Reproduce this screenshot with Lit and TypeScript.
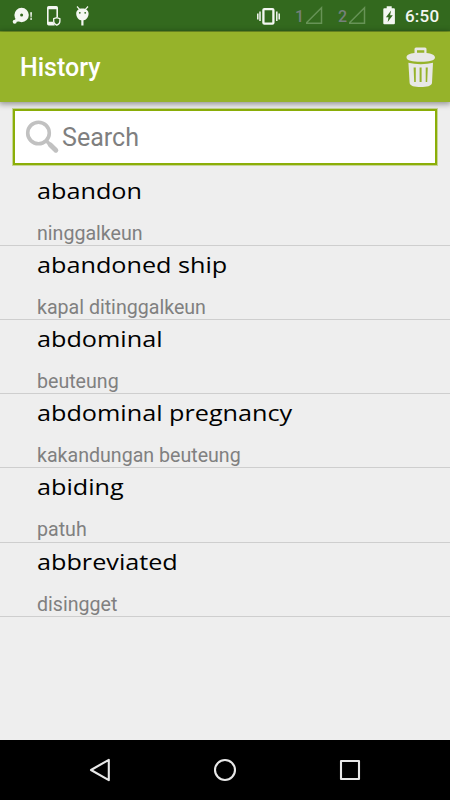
import { LitElement, html, css } from "lit";
import { customElement } from "lit/decorators.js";

interface Entry {
  word: string;
  meaning: string;
}

const ENTRIES: Entry[] = [
  { word: "abandon", meaning: "ninggalkeun" },
  { word: "abandoned ship", meaning: "kapal ditinggalkeun" },
  { word: "abdominal", meaning: "beuteung" },
  { word: "abdominal pregnancy", meaning: "kakandungan beuteung" },
  { word: "abiding", meaning: "patuh" },
  { word: "abbreviated", meaning: "disingget" },
];

@customElement("status-bar")
class StatusBar extends LitElement {
  static styles = css`
    :host {
      display: flex;
      justify-content: space-between;
      height: 32px;
      background: linear-gradient(#33691e 31px, #7b9d27 31px);
      font-family: Roboto, "Liberation Sans", sans-serif;
    }
    svg {
      display: block;
    }
    .right {
      display: flex;
    }
    .sim {
      width: 11px;
      font-size: 16px;
      font-weight: 500;
      line-height: 33px;
      color: #75807a;
    }
    .sim.two {
      margin-left: 13px;
    }
    .time {
      width: 45px;
      padding-left: 9px;
      font-size: 17px;
      font-weight: 500;
      line-height: 33px;
      letter-spacing: 0.2px;
      color: #f3f6f1;
      white-space: nowrap;
    }
  `;

  private signal() {
    return html`<svg width="19" height="31" viewBox="0 0 19 31">
      <path d="M0 23.300H15.500V7.800Z" fill="none" stroke="#679356" stroke-width="1.500" />
    </svg>`;
  }

  render() {
    return html`
      <svg width="100" height="31" viewBox="0 0 100 31">
        <g fill="#f4f7f2">
          <circle cx="21.600" cy="15" r="7.200" />
          <circle cx="14.700" cy="21.700" r="2" />
          <path d="M15 19.500l1.500-2 3 3.500-3 1z" />
          <path d="M30.200 12.200h1.800l-.4 5.200h-1z" />
          <circle cx="31.100" cy="19" r=".9" />
          <path d="M48.700 6h7.600q1.700 0 1.700 1.700v9.600h-1.600V9.200h-7.800v12.600h4.600l1.600 3.600h-6.100q-1.700 0-1.700-1.700v-16q0-1.700 1.700-1.700z" />
          <path d="M76.200 13.600c0-3.200 2.200-5.200 6.100-5.200s6.300 2 6.300 5.200c0 4.200-2.800 7-6.200 7s-6.200-2.800-6.200-7z" />
          <path d="M81.300 20h2.200v5.500h-2.200z" />
        </g>
        <path d="M77 6.500l2.800 3.100M88 6.500l-2.800 3.100" stroke="#f4f7f2" stroke-width="1.200" />
        <circle cx="21.600" cy="15" r="1.500" fill="#33691e" />
        <circle cx="79.800" cy="12.800" r=".9" fill="#33691e" />
        <circle cx="85.200" cy="12.800" r=".9" fill="#33691e" />
        <path
          d="M53.700 18.600l3.100-1 3.100 1v2.600c0 2-1.200 3.300-3.100 4-2-.7-3.100-2-3.100-4z"
          fill="#33691e"
          stroke="#f4f7f2"
          stroke-width="1.300"
        />
      </svg>
      <div class="right">
        <svg width="38" height="31" viewBox="0 0 38 31">
          <rect x="6.400" y="9.100" width="10" height="14.600" rx="1" fill="none" stroke="#f4f7f2" stroke-width="2.300" />
          <path d="M.8 13.600v6M3 11.600v9.400M19.800 11.600v9.400M22.200 13.600v6" stroke="#f4f7f2" stroke-width="1.500" />
        </svg>
        <span class="sim">1</span>${this.signal()}
        <span class="sim two">2</span>${this.signal()}
        <svg width="28" height="31" viewBox="0 0 28 31">
          <path d="M18.700 6.200h5v2h2.200q1 0 1 1v14q0 1-1 1h-9.600q-1 0-1-1v-14q0-1 1-1h2.400z" fill="#f4f7f2" />
          <path d="M23.100 10.400l-5.200 6.800h2.600l-.8 4.800 5.100-6.800h-2.700z" fill="#33691e" />
        </svg>
        <span class="time">6:50</span>
      </div>
    `;
  }
}

@customElement("app-bar")
class AppBar extends LitElement {
  static styles = css`
    :host {
      display: flex;
      align-items: center;
      justify-content: space-between;
      box-sizing: border-box;
      height: 69.500px;
      padding: 0 14.500px 0 20px;
      background: #96b32a;
      box-shadow: 0 1px 6px 1px rgba(0, 0, 0, 0.4);
      position: relative;
      font-family: Roboto, "Liberation Sans", sans-serif;
    }
    .title {
      padding-top: 2px;
      font-size: 25px;
      font-weight: 500;
      line-height: 30px;
      color: #fff;
    }
    svg {
      display: block;
    }
  `;

  render() {
    return html`
      <span class="title">History</span>
      <svg width="30" height="42" viewBox="0 0 30 42">
        <g fill="#e8e8e6">
          <path
            fill-rule="evenodd"
            d="M10 1.500h9q1.500 0 1.500 1.500V7.100c5 .6 8.300 2 8.500 4.400 0 3-6 4.300-14.200 4.300s-14.300-1.300-14.300-4.300c0-2.400 3-3.800 8-4.400V3q0-1.500 1.500-1.500zM11 4.200V6.800h7.300V4.200z"
          />
          <path
            fill-rule="evenodd"
            d="M2.400 16.700c7 1.900 17.800 1.900 24.600 0l-1 20.100c-.2 3.300-5.300 4.300-11.300 4.300s-10.900-1-11.100-4.300zM7.600 21.500l.6 14.500h1.600V21.500zM13.600 21.500v14.500h2V21.500zM19.700 21.500v14.500h1.500l.6-14.500z"
          />
        </g>
      </svg>
    `;
  }
}

@customElement("search-box")
class SearchBox extends LitElement {
  static styles = css`
    :host {
      display: flex;
      align-items: center;
      box-sizing: border-box;
      height: 56px;
      margin: 7.500px 13px 0;
      padding-left: 8.500px;
      border: 2px solid #8bae08;
      box-shadow: 0 0 0 1px rgba(141, 176, 16, 0.4);
      background: #fff;
      font-family: Roboto, "Liberation Sans", sans-serif;
    }
    svg {
      display: block;
      flex: none;
    }
    .hint {
      margin-left: 1.200px;
      font-size: 26px;
      line-height: 32px;
      color: #7f7f7f;
      transform: scaleX(0.965);
      transform-origin: left;
    }
  `;

  render() {
    return html`
      <svg width="37" height="38" viewBox="0 0 37 38">
        <circle cx="14.500" cy="15" r="10.800" fill="none" stroke="#c1c1c1" stroke-width="3.600" />
        <path d="M22.500 23l3 3" stroke="#c1c1c1" stroke-width="3.500" />
        <path d="M26.200 26.800l5.600 5.400" stroke="#c1c1c1" stroke-width="5" stroke-linecap="round" />
      </svg>
      <span class="hint">Search</span>
    `;
  }
}

@customElement("history-list")
class HistoryList extends LitElement {
  static styles = css`
    :host {
      display: block;
      padding-top: 6.700px;
    }
    .row {
      display: flex;
      flex-direction: column;
      align-items: flex-start;
      box-sizing: border-box;
      height: 74.200px;
      padding-left: 37px;
      border-bottom: 1px solid #cecece;
    }
    .word {
      font-family: "Open Sans", "Noto Sans", sans-serif;
      font-size: 22.500px;
      line-height: 38px;
      color: #000;
      transform: scaleX(1.12);
      transform-origin: left;
      white-space: nowrap;
    }
    .meaning {
      margin-top: 10px;
      font-family: Roboto, "Liberation Sans", sans-serif;
      font-size: 20px;
      line-height: 26px;
      color: #808080;
      transform: scaleX(0.98);
      transform-origin: left;
      white-space: nowrap;
    }
  `;

  render() {
    return ENTRIES.map(
      (e) => html`<div class="row">
        <span class="word">${e.word}</span>
        <span class="meaning">${e.meaning}</span>
      </div>`
    );
  }
}

@customElement("nav-bar")
class NavBar extends LitElement {
  static styles = css`
    :host {
      display: flex;
      align-items: center;
      justify-content: center;
      gap: 95px;
      height: 60px;
      background: #000;
    }
    svg {
      display: block;
      fill: none;
      stroke: #e8e8e8;
      stroke-width: 2.100;
      stroke-linejoin: round;
    }
  `;

  render() {
    return html`
      <svg width="30" height="30" viewBox="0 0 30 30"><path d="M6 15L23.800 4.800V25.200Z" /></svg>
      <svg width="30" height="30" viewBox="0 0 30 30"><circle cx="15" cy="15" r="10" /></svg>
      <svg width="30" height="30" viewBox="0 0 30 30"><rect x="6" y="6" width="18" height="18" /></svg>
    `;
  }
}

@customElement("app-root")
class AppRoot extends LitElement {
  static styles = css`
    :host {
      display: flex;
      flex-direction: column;
      width: 450px;
      height: 800px;
      overflow: hidden;
      background: #eee;
    }
    history-list {
      flex: 1;
    }
  `;

  render() {
    return html`
      <status-bar></status-bar>
      <app-bar></app-bar>
      <search-box></search-box>
      <history-list></history-list>
      <nav-bar></nav-bar>
    `;
  }
}
